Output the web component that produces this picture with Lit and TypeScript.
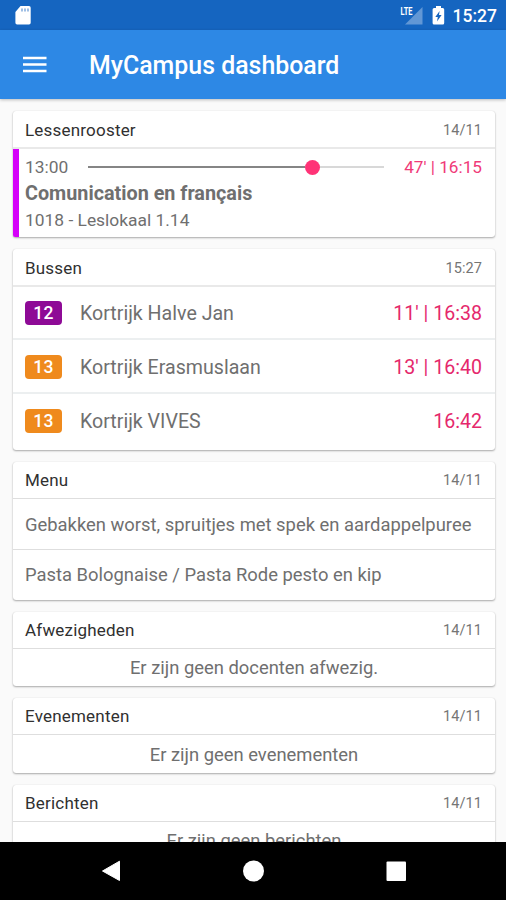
import { LitElement, html, css, svg } from "lit";
import { customElement, property } from "lit/decorators.js";

interface Bus {
  line: string;
  tone: string;
  stop: string;
  time: string;
}

const BUSES: Bus[] = [
  { line: "12", tone: "purple", stop: "Kortrijk Halve Jan", time: "11' | 16:38" },
  { line: "13", tone: "orange", stop: "Kortrijk Erasmuslaan", time: "13' | 16:40" },
  { line: "13", tone: "orange", stop: "Kortrijk VIVES", time: "16:42" },
];

const MENU = [
  "Gebakken worst, spruitjes met spek en aardappelpuree",
  "Pasta Bolognaise / Pasta Rode pesto en kip",
];

@customElement("status-bar")
class StatusBar extends LitElement {
  static styles = css`
    :host { display: flex; align-items: center; height: 30px; background: #1565c0; color: #fff; padding: 0 9px 0 15px; }
    .sd { margin-right: auto; }
    svg { display: block; flex: none; }
    .lte { font-size: 10px; font-weight: 700; fill: #fff; }
    .battery { margin-left: 9px; }
    .clock { margin-left: 8px; font-size: 17.500px; line-height: 30px; font-weight: 500; padding-top: 2px; }
  `;
  render() {
    return html`
      <svg class="sd" width="17" height="20" viewBox="0 0 17 20">
        <path fill="#fff" d="M5.500 1H14a1.700 1.700 0 0 1 1.700 1.700v15a1.700 1.700 0 0 1-1.700 1.700H2.100a1.700 1.700 0 0 1-1.700-1.700V7z" />
        <path stroke="#1565c0" stroke-opacity=".55" stroke-width="1.500" d="M7 3.500v3M10 3.500v3M13 3.500v3" />
      </svg>
      <svg width="23" height="20" viewBox="0 0 23 20">
        <path fill="#6297d5" d="M22.500 2v17.500H5z" />
        <path fill="#1565c0" d="M0 0h13v10H0z" />
        <text class="lte" x="0.500" y="9.500" textLength="12" lengthAdjust="spacingAndGlyphs">LTE</text>
      </svg>
      <svg class="battery" width="13" height="20" viewBox="0 0 13 20">
        <path fill="#fff" d="M4 1h5v2h1.700a1.500 1.500 0 0 1 1.500 1.500V18a1.500 1.500 0 0 1-1.500 1.500H2.100A1.500 1.500 0 0 1 .6 18V4.500A1.500 1.500 0 0 1 2.100 3H4z" />
        <path fill="#1565c0" d="M7.600 6 3.300 12h2.500l-.8 4.500L9.600 10H7z" />
      </svg>
      <span class="clock">15:27</span>
    `;
  }
}

@customElement("app-bar")
class AppBar extends LitElement {
  static styles = css`
    :host { display: flex; align-items: center; height: 69px; padding: 0 23px; background: #2d88e5; color: #fff; gap: 42px; box-shadow: 0 1px 3px rgba(0, 0, 0, 0.25); position: relative; }
    svg { display: block; }
    .title { font-size: 24.900px; line-height: 30px; font-weight: 500; padding-top: 3px; }
  `;
  render() {
    return html`
      <svg width="24" height="20" viewBox="0 0 24 20">
        <path stroke="#fff" stroke-width="2.500" d="M0 3h23.500M0 9.500h23.500M0 16h23.500" />
      </svg>
      <span class="title">MyCampus dashboard</span>
    `;
  }
}

@customElement("dash-card")
class DashCard extends LitElement {
  @property() heading = "";
  @property() stamp = "";
  static styles = css`
    :host { display: block; background: #fff; border-radius: 3px; box-shadow: 0 1px 2px rgba(0, 0, 0, 0.32), 0 0 1px rgba(0, 0, 0, 0.15); }
    .head { display: flex; align-items: center; justify-content: space-between; box-sizing: border-box; height: 38px; padding: 1px 13px 0 12px; border-bottom: 2px solid #e9e9e9; }
    :host([slim]) .head { height: 37px; padding-top: 0; border-bottom: 1px solid #dedede; }
    .heading { font-size: 17px; color: #303030; letter-spacing: 0.2px; }
    .stamp { font-size: 14.500px; color: #757575; letter-spacing: 0.1px; padding-top: 1px; }
  `;
  render() {
    return html`
      <div class="head"><span class="heading">${this.heading}</span><span class="stamp">${this.stamp}</span></div>
      <slot></slot>
    `;
  }
}

@customElement("nav-bar")
class NavBar extends LitElement {
  static styles = css`
    :host { display: flex; justify-content: center; height: 58px; background: #000; align-items: center; }
    svg { display: block; }
  `;
  render() {
    return html`
      <svg width="506" height="58" viewBox="0 0 506 58">
        ${svg`<path fill="#fff" stroke="#fff" stroke-linejoin="round" d="M119.500 19.200v19.300L102.500 29z"/>
        <circle fill="#fff" cx="253.500" cy="29" r="10.500"/>
        <rect fill="#fff" x="386.500" y="19.500" width="19.500" height="19.500" rx="1"/>`}
      </svg>
    `;
  }
}

@customElement("app-root")
class AppRoot extends LitElement {
  static styles = css`
    :host { display: flex; flex-direction: column; width: 506px; height: 900px; overflow: hidden; background: #fafafa; font-family: Roboto, sans-serif; color: #6f6f6f; }
    status-bar, app-bar, nav-bar { flex: none; }
    .cards { flex: 1; min-height: 0; overflow: hidden; display: flex; flex-direction: column; gap: 12px; padding: 12px 11px 0 13px; }
    dash-card { flex: none; }
    .lesson { box-sizing: border-box; height: 88px; border-left: 6px solid #d500f9; border-bottom-left-radius: 2px; padding: 5px 13px 0 6px; }
    .when { display: flex; align-items: center; height: 26px; font-size: 17.400px; }
    .track { display: flex; align-items: center; width: 296px; margin: 0 auto 0 20px; }
    .done { width: 217px; height: 2px; background: #858585; }
    .dot { width: 15px; height: 15px; border-radius: 50%; background: #ff3377; }
    .left { flex: 1; height: 2px; background: #d8d8d8; }
    .pink { color: #f03a78; }
    .when .pink { font-size: 17.200px; }
    .course { font-size: 19.800px; line-height: 26px; font-weight: 700; padding-top: 1px; }
    .room { font-size: 17.400px; line-height: 26px; }
    .bus { display: flex; align-items: center; box-sizing: border-box; height: 54px; padding: 1px 13px 0 12px; font-size: 19.600px; border-top: 2px solid #eceff0; }
    .bus:first-child { height: 51px; border-top: 0; }
    .bus:nth-child(2) { padding-top: 2px; }
    .bus:last-child { height: 58px; padding-bottom: 2px; }
    .badge { width: 37px; height: 24px; margin-right: 18px; margin-top: -1px; border-radius: 4px; color: #fff; font-size: 17.500px; line-height: 25px; font-weight: 500; text-align: center; letter-spacing: 0.2px; }
    .purple { background: #8e0a96; }
    .orange { background: #ef8a1d; }
    .stop { margin-right: auto; }
    .bus .pink { color: #e5286c; }
    .dish { display: flex; align-items: center; box-sizing: border-box; height: 50px; padding: 0 12px; font-size: 18.400px; white-space: nowrap; }
    .dish + .dish { border-top: 1px solid #dedede; height: 50.500px; }
    .empty { display: flex; align-items: center; justify-content: center; height: 37.750px; font-size: 18.400px; }
  `;
  render() {
    return html`
      <status-bar></status-bar>
      <app-bar></app-bar>
      <main class="cards">
        <dash-card heading="Lessenrooster" stamp="14/11">
          <div class="lesson">
            <div class="when">
              <span>13:00</span>
              <div class="track"><div class="done"></div><div class="dot"></div><div class="left"></div></div>
              <span class="pink">47' | 16:15</span>
            </div>
            <div class="course">Comunication en français</div>
            <div class="room">1018 - Leslokaal 1.14</div>
          </div>
        </dash-card>
        <dash-card heading="Bussen" stamp="15:27">
          <div>
            ${BUSES.map((b) => html`<div class="bus">
              <span class="badge ${b.tone}">${b.line}</span><span class="stop">${b.stop}</span><span class="pink">${b.time}</span>
            </div>`)}
          </div>
        </dash-card>
        <dash-card slim heading="Menu" stamp="14/11">
          ${MENU.map((m) => html`<div class="dish">${m}</div>`)}
        </dash-card>
        <dash-card slim heading="Afwezigheden" stamp="14/11"><div class="empty">Er zijn geen docenten afwezig.</div></dash-card>
        <dash-card slim heading="Evenementen" stamp="14/11"><div class="empty">Er zijn geen evenementen</div></dash-card>
        <dash-card slim heading="Berichten" stamp="14/11"><div class="empty">Er zijn geen berichten</div></dash-card>
      </main>
      <nav-bar></nav-bar>
    `;
  }
}
